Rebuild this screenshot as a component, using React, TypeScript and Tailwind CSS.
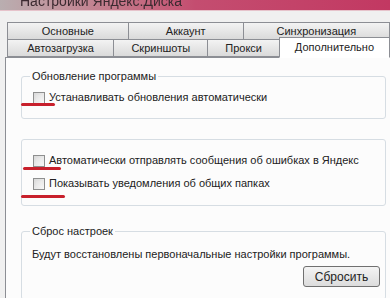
const Tab = ({ label, w, active }: { label: string; w: string; active?: boolean }) => (
    <div
        className={`${w} flex items-center justify-center border border-[#8c8e94] -ml-px first:ml-0 ${
            active
                ? 'h-[21px] -mt-[2px] bg-white border-b-white z-10 relative'
                : 'h-[18px] bg-gradient-to-b from-[#f3f3f3] to-[#dadada]'
        }`}
    >
        {label}
    </div>
);

const Checkbox = () => (
    <span className="w-[12px] h-[12px] border border-[#8e8f8f] bg-gradient-to-br from-[#d9d9d9] to-[#f8f8f8] p-[2px] shrink-0">
        <span className="block w-full h-full bg-gradient-to-br from-[#e2e2e2] to-[#f4f4f4]" />
    </span>
);

const CheckRow = ({ label, mark }: { label: string; mark: string }) => (
    <div className="relative flex items-center gap-[4px] h-[13px] whitespace-nowrap">
        <Checkbox />
        <span>{label}</span>
        <span className={`absolute h-[3px] rounded-full bg-[#c8202c] ${mark}`} />
    </div>
);

const App = () => {
    return (
        <div className="w-[390px] h-[298px] overflow-hidden bg-[#f0f0f0] text-[11px] leading-none text-[#222] font-['Liberation_Sans','DejaVu_Sans',sans-serif]">
            <div className="h-[11px] overflow-hidden bg-gradient-to-r from-[#b9aeb0] via-[#c44d70] to-[#c23862] border-b border-[#e6c3cb]">
                <div className="pl-[20px] -mt-[6px] text-[14px] text-[#3b2a30] blur-[0.6px]">Настройки Яндекс.Диска</div>
            </div>
            <div className="h-[11px]" />
            <div className="pl-[7px] flex flex-col">
                <div className="flex">
                    <Tab label="Основные" w="w-[124px]" />
                    <Tab label="Аккаунт" w="w-[118px]" />
                    <Tab label="Синхронизация" w="w-[150px]" />
                </div>
                <div className="flex -mt-px">
                    <Tab label="Автозагрузка" w="w-[108px]" />
                    <Tab label="Скриншоты" w="w-[96px]" />
                    <Tab label="Прокси" w="w-[73px]" />
                    <Tab label="Дополнительно" w="w-[112px]" active />
                </div>
            </div>
            <div className="ml-[5px] -mt-px h-[260px] bg-[#fcfcfc] border-l border-t border-[#8c8e94] pl-[15px] pr-[4px] pt-[13px] flex flex-col">
                <fieldset className="border border-[#d6dde3] rounded-[3px] pl-[11px] pt-[9px] pb-[14px]">
                    <legend className="px-[2px] -ml-[3px]">Обновление программы</legend>
                    <CheckRow label="Устанавливать обновления автоматически" mark="-left-[12px] w-[34px] top-[12px]" />
                </fieldset>
                <div className="mt-[20px] border border-[#d6dde3] rounded-[3px] pl-[11px] pt-[14px] pb-[15px] flex flex-col gap-[10px]">
                    <CheckRow label="Автоматически отправлять сообщения об ошибках в Яндекс" mark="-left-[10px] w-[38px] top-[13px]" />
                    <CheckRow label="Показывать уведомления об общих папках" mark="-left-[12px] w-[44px] top-[18px]" />
                </div>
                <fieldset className="mt-[20px] border border-[#d6dde3] rounded-[3px] pl-[10px] pr-[5px] pt-[12px] pb-[12px] flex flex-col">
                    <legend className="px-[2px] -ml-[2px]">Сброс настроек</legend>
                    <div>Будут восстановлены первоначальные настройки программы.</div>
                    <div className="flex justify-end mt-[6px]">
                        <button className="w-[77px] h-[21px] rounded-[3px] border border-[#707070] bg-gradient-to-b from-[#f4f4f4] to-[#dcdcdc] text-[12px]">
                            Сбросить
                        </button>
                    </div>
                </fieldset>
            </div>
        </div>
    );
};

export default App;
